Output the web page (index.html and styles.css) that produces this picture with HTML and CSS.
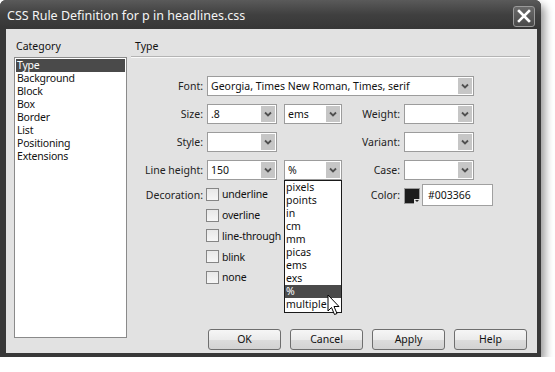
FILE: index.html
```html
<!DOCTYPE html>
<html>
<head>
<meta charset="utf-8">
<link rel="stylesheet" href="styles.css">
</head>
<body>
<div class="window">
  <div class="titlebar">
    <span class="title">CSS Rule Definition for p in headlines.css</span>
    <span class="close"><svg width="14" height="14" viewBox="0 0 14 14"><path d="M2 2 L12 12 M12 2 L2 12" stroke="#fff" stroke-width="2.6" stroke-linecap="square"/></svg></span>
  </div>
  <div class="content">
    <div class="leftcol">
      <div class="caption">Category</div>
      <ul class="catlist">
        <li class="sel-item">Type</li>
        <li>Background</li>
        <li>Block</li>
        <li>Box</li>
        <li>Border</li>
        <li>List</li>
        <li>Positioning</li>
        <li>Extensions</li>
      </ul>
    </div>
    <div class="rightcol">
      <div class="panelhead">Type</div>
      <div class="form">
        <label class="lbl">Font:</label>
        <div class="sel span4"><span class="val">Georgia, Times New Roman, Times, serif</span><span class="arr"></span></div>

        <label class="lbl">Size:</label>
        <div class="sel w70"><span class="val">.8</span><span class="arr"></span></div>
        <div class="sel w58"><span class="val">ems</span><span class="arr"></span></div>
        <label class="lbl">Weight:</label>
        <div class="sel w70"><span class="val"></span><span class="arr"></span></div>

        <label class="lbl">Style:</label>
        <div class="sel w70"><span class="val"></span><span class="arr"></span></div>
        <div></div>
        <label class="lbl">Variant:</label>
        <div class="sel w70"><span class="val"></span><span class="arr"></span></div>

        <label class="lbl">Line height:</label>
        <div class="sel w70"><span class="val">150</span><span class="arr"></span></div>
        <div class="sel w58 open"><span class="val">%</span><span class="arr"></span>
          <ul class="droplist">
            <li>pixels</li>
            <li>points</li>
            <li>in</li>
            <li>cm</li>
            <li>mm</li>
            <li>picas</li>
            <li>ems</li>
            <li>exs</li>
            <li class="hl">%</li>
            <li>multiple</li>
          </ul>
          <svg class="cursor" width="14" height="22" viewBox="0 0 14 22"><path d="M1 1 L1 17 L4.5 13.5 L7.5 20.5 L10 19.5 L7 12.5 L12 12.5 Z" fill="#fff" stroke="#000" stroke-width="1" stroke-linejoin="round"/></svg>
        </div>
        <label class="lbl">Case:</label>
        <div class="sel w70"><span class="val"></span><span class="arr"></span></div>

        <label class="lbl top">Decoration:</label>
        <div class="checks">
          <div class="chk"><span class="box"></span>underline</div>
          <div class="chk"><span class="box"></span>overline</div>
          <div class="chk"><span class="box"></span>line-through</div>
          <div class="chk"><span class="box"></span>blink</div>
          <div class="chk"><span class="box"></span>none</div>
        </div>
        <div></div>
        <label class="lbl top">Color:</label>
        <div class="colorrow">
          <span class="swatch"><span class="swarr"></span></span>
          <span class="colorfield">#003366</span>
        </div>
      </div>
      <div class="buttons">
        <span class="btn">OK</span>
        <span class="btn">Cancel</span>
        <span class="btn">Apply</span>
        <span class="btn">Help</span>
      </div>
    </div>
  </div>
</div>
</body>
</html>
```
FILE: styles.css
```css
html, body {
  margin: 0;
  padding: 0;
  background: #fff;
}
body {
  font-family: "Noto Sans", "Open Sans", sans-serif;
  font-size: 10.5px;
  color: #111;
}
.window {
  width: 541px;
  height: 357px;
  box-sizing: border-box;
  background: #383838;
  border-radius: 6px 6px 0 0;
  box-shadow: 4px 5px 9px rgba(0,0,0,0.4);
  display: flex;
  flex-direction: column;
  padding: 0 4px 4px 6px;
}
.titlebar {
  height: 29px;
  flex: none;
  display: flex;
  align-items: center;
  background: linear-gradient(#5a5a5a, #404040 50%, #363636);
  margin: 0 -4px 0 -6px;
  padding: 0 6px 0 7px;
  border-radius: 6px 6px 0 0;
}
.title {
  color: #f4f4f4;
  font-size: 12.5px;
  padding-top: 1px;
}
.close {
  margin-left: auto;
  width: 22px;
  height: 21px;
  box-sizing: border-box;
  border: 1px solid #9a9a9a;
  border-radius: 3px;
  background: linear-gradient(#6a6a6a, #4a4a4a);
  display: flex;
  align-items: center;
  justify-content: center;
  margin-top: 3px;
}
.content {
  flex: 1;
  background: #e2e2e2;
  display: flex;
  padding: 0 10px 3px 8px;
}
.leftcol {
  width: 113px;
  display: flex;
  flex-direction: column;
  padding-bottom: 12px;
}
.caption {
  padding: 11px 0 0 2px;
  height: 17px;
  line-height: 13px;
}
.catlist {
  list-style: none;
  margin: 0;
  padding: 1px;
  flex: 1;
  background: #fff;
  border: 1px solid #8a8a8a;
  box-sizing: border-box;
  letter-spacing: -0.2px;
}
.catlist li {
  height: 13px;
  line-height: 13px;
  padding-left: 1px;
}
.catlist li.sel-item {
  background: #4a4a4a;
  color: #fff;
}
.rightcol {
  flex: 1;
  margin-left: 3px;
  display: flex;
  flex-direction: column;
}
.panelhead {
  padding: 11px 0 0 4px;
  height: 16px;
  line-height: 13px;
  border-bottom: 1px solid #b4b4b4;
  box-shadow: 0 1px 0 #fafafa;
  margin-left: 1px;
  margin-right: -3px;
}
.form {
  margin-top: 15px;
  display: grid;
  grid-template-columns: 77px 77px 65px 55px 70px;
  grid-template-rows: 28px 28px 28px 28px auto;
  align-items: center;
}
.lbl {
  text-align: right;
  padding-right: 4px;
  white-space: nowrap;
  color: #222;
}
.lbl.top {
  align-self: start;
  padding-top: 4px;
}
.sel {
  position: relative;
  height: 20px;
  box-sizing: border-box;
  border: 1px solid #9c9c9c;
  background: #fff;
  display: flex;
  align-items: center;
  padding-left: 3px;
}
.sel.w70 { width: 70px; }
.sel.w58 { width: 58px; }
.sel.span4 { grid-column: 2 / 6; }
.val {
  flex: 1;
  white-space: nowrap;
  overflow: hidden;
}
.arr {
  width: 14px;
  height: 16px;
  margin-right: 1px;
  background-color: #c6c6c6;
  background-image: url("data:image/svg+xml;utf8,<svg xmlns='http://www.w3.org/2000/svg' width='14' height='16'><path d='M4 6.5 L7 9.5 L10 6.5' fill='none' stroke='%23505050' stroke-width='1.8'/></svg>");
  background-repeat: no-repeat;
}
.droplist {
  position: absolute;
  left: -1px;
  top: 19px;
  width: 58px;
  box-sizing: border-box;
  margin: 0;
  padding: 0 0 1px 0;
  list-style: none;
  background: #fff;
  border: 1px solid #1a1a1a;
  z-index: 2;
}
.droplist li {
  height: 13px;
  line-height: 13px;
  padding-left: 1px;
}
.droplist li.hl {
  background: #4a4a4a;
  color: #fff;
}
.cursor {
  position: absolute;
  left: 42px;
  top: 133px;
  z-index: 3;
}
.checks {
  grid-column: 2 / 3;
  align-self: start;
  display: flex;
  flex-direction: column;
}
.chk {
  height: 20.75px;
  display: flex;
  align-items: center;
  white-space: nowrap;
  margin-left: -1px;
  letter-spacing: -0.2px;
}
.box {
  width: 13px;
  height: 13px;
  box-sizing: border-box;
  border: 1px solid #858585;
  background: linear-gradient(#e8e8e8, #f6f6f6);
  margin-right: 3px;
}
.colorrow {
  align-self: start;
  display: flex;
  align-items: center;
  width: 100px;
}
.swatch {
  position: relative;
  width: 16px;
  height: 16px;
  box-sizing: border-box;
  background: #1c1c1c;
  border: 1px solid #9a9a9a;
  margin-top: 2px;
}
.swarr {
  position: absolute;
  right: -1px;
  bottom: -1px;
  width: 6px;
  height: 5px;
  background: #e2e2e2;
}
.swarr::after {
  content: "";
  position: absolute;
  left: 1px;
  top: 1px;
  border-left: 2px solid transparent;
  border-right: 2px solid transparent;
  border-top: 2px solid #222;
}
.colorfield {
  margin-left: 2px;
  width: 71px;
  height: 22px;
  box-sizing: border-box;
  border: 1px solid #a0a0a0;
  background: #fff;
  padding-left: 5px;
  line-height: 20px;
}
.buttons {
  margin-top: auto;
  display: flex;
  justify-content: flex-end;
  gap: 9px;
}
.btn {
  width: 73px;
  height: 21px;
  box-sizing: border-box;
  border: 1px solid #6e6e6e;
  border-radius: 3px;
  background: linear-gradient(#f6f6f6, #ebebeb 50%, #dcdcdc 51%, #d2d2d2);
  text-align: center;
  line-height: 19px;
  color: #111;
}
```
